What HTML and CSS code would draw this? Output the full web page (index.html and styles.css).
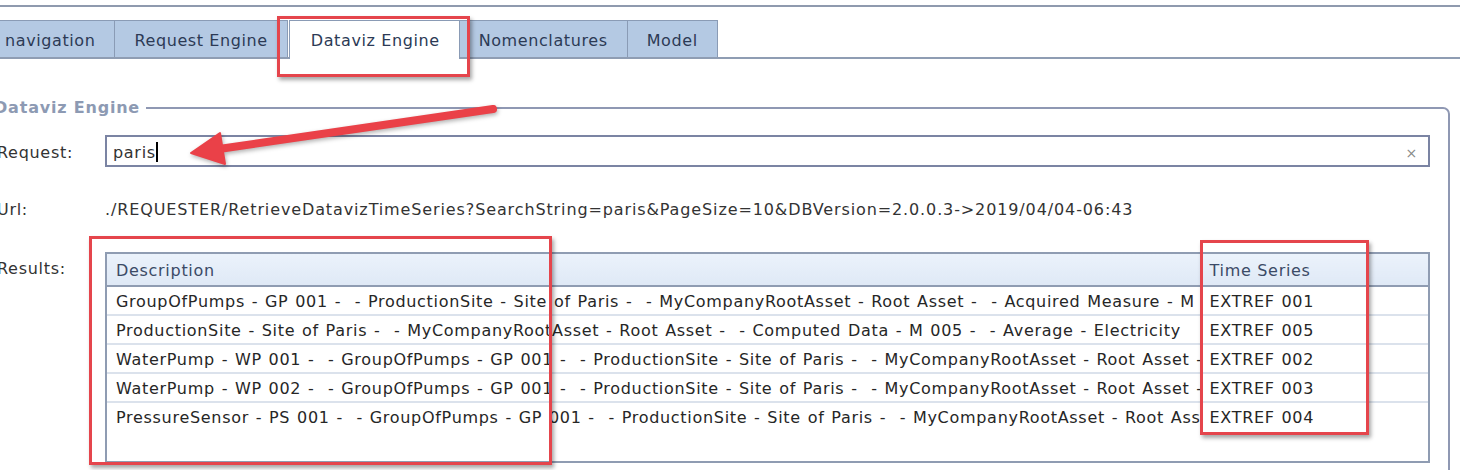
FILE: index.html
```html
<!DOCTYPE html>
<html>
<head>
<meta charset="utf-8">
<link rel="stylesheet" href="styles.css">
</head>
<body>
<div class="page">
  <div class="topline"></div>
  <div class="tabs">
    <div class="tab">navigation</div>
    <div class="tab">Request Engine</div>
    <div class="tab active">Dataviz Engine</div>
    <div class="tab">Nomenclatures</div>
    <div class="tab">Model</div>
  </div>
  <fieldset class="panel">
    <legend>Dataviz Engine</legend>
    <div class="form">
      <div class="label req-label">Request:</div>
      <div class="input"><span class="value">paris</span><span class="caret"></span><span class="clear">×</span></div>
      <div class="label url-label">Url:</div>
      <div class="url">./REQUESTER/RetrieveDatavizTimeSeries?SearchString=paris&amp;PageSize=10&amp;DBVersion=2.0.0.3-&gt;2019/04/04-06:43</div>
      <div class="label results-label">Results:</div>
      <div class="grid-wrap">
        <table class="grid">
          <colgroup><col class="c-desc"><col class="c-ts"></colgroup>
          <thead><tr><th>Description</th><th>Time Series</th></tr></thead>
          <tbody>
            <tr><td>GroupOfPumps - GP 001 -  - ProductionSite - Site of Paris -  - MyCompanyRootAsset - Root Asset -  - Acquired Measure - M 001 -  - Pressure</td><td>EXTREF 001</td></tr>
            <tr><td>ProductionSite - Site of Paris -  - MyCompanyRootAsset - Root Asset -  - Computed Data - M 005 -  - Average - Electricity</td><td>EXTREF 005</td></tr>
            <tr><td>WaterPump - WP 001 -  - GroupOfPumps - GP 001 -  - ProductionSite - Site of Paris -  - MyCompanyRootAsset - Root Asset -  - Acquired</td><td>EXTREF 002</td></tr>
            <tr><td>WaterPump - WP 002 -  - GroupOfPumps - GP 001 -  - ProductionSite - Site of Paris -  - MyCompanyRootAsset - Root Asset -  - Acquired</td><td>EXTREF 003</td></tr>
            <tr><td>PressureSensor - PS 001 -  - GroupOfPumps - GP 001 -  - ProductionSite - Site of Paris -  - MyCompanyRootAsset - Root Asset -  - Acquired</td><td>EXTREF 004</td></tr>
          </tbody>
        </table>
        <div class="grid-empty"></div>
      </div>
    </div>
  </fieldset>

  <div class="mark mark-tab"></div>
  <div class="mark mark-desc"></div>
  <div class="mark mark-ts"></div>
  <svg class="arrow" width="1460" height="470" viewBox="0 0 1460 470">
    <line x1="493" y1="109" x2="212" y2="150" stroke="#ea4148" stroke-width="8" stroke-linecap="round"/>
    <polygon points="191,153 220,133 225,164" fill="#ea4148" stroke="#ea4148" stroke-width="2" stroke-linejoin="round"/>
  </svg>
</div>
</body>
</html>
```

FILE: styles.css
```css
html, body {
  margin: 0;
  padding: 0;
  overflow: hidden;
  background: #ffffff;
}
body {
  font-family: "DejaVu Sans", Verdana, sans-serif;
  font-size: 16px;
  letter-spacing: 0.7px;
  color: #333333;
}
.page {
  position: relative;
  margin-left: -14px;
  padding-top: 5px;
}
.topline {
  height: 2px;
  background: #8f9aae;
}
.tabs {
  display: flex;
  margin-top: 13px;
  margin-left: -1px;
  height: 37px;
  border-bottom: 2px solid #8f9db3;
}
.tab {
  box-sizing: border-box;
  height: 37px;
  padding: 3px 19px 0 19px;
  display: flex;
  align-items: center;
  background: #b4c9e3;
  border: 1px solid #8a9bb5;
  border-bottom: none;
  border-left: none;
  color: #2c3a55;
  letter-spacing: 0.6px;
}
.tab:first-child {
  border-left: 1px solid #8a9bb5;
}
.tab.active {
  background: #ffffff;
  border-left: 1px solid #8a9bb5;
  margin-left: 1px;
  padding-left: 21px;
  height: 39px;
  margin-bottom: -2px;
  padding-bottom: 2px;
}
.panel {
  margin: 39px 10px 0 0;
  padding: 17px 18px 20px 9px;
  border: 2px solid #8f98b3;
  border-radius: 0 7px 0 0;
  min-height: 400px;
}
.panel legend {
  margin-left: -3px;
  padding: 0 6px 0 0;
  line-height: 20px;
  font-weight: bold;
  letter-spacing: 0.8px;
  color: #8d9ab3;
}
.form {
  display: grid;
  grid-template-columns: 108px 1fr;
  align-items: start;
}
.label {
  line-height: 32px;
}
.req-label {
  padding-top: 3px;
  line-height: 29px;
}
.input {
  box-sizing: border-box;
  height: 32px;
  border: 2px solid #7b84a3;
  display: flex;
  align-items: center;
  padding: 3px 6px 0 6px;
}
.caret {
  width: 2px;
  height: 20px;
  background: #000;
  margin-top: -2px;
}
.clear {
  margin-left: auto;
  margin-right: 4px;
  color: #8a8a8a;
  font-size: 14px;
}
.url-label, .url {
  margin-top: 27px;
  line-height: 32px;
}
.url {
  letter-spacing: 0.88px;
}
.results-label {
  margin-top: 26px;
  padding-top: 2px;
  line-height: 30px;
}
.grid-wrap {
  margin-top: 26px;
  border: 2px solid #8f9cb2;
}
.grid {
  width: 100%;
  table-layout: fixed;
  border-collapse: collapse;
}
.c-desc { width: 1093px; }
.grid th {
  height: 30px;
  padding: 1px 9px 0 9px;
  text-align: left;
  font-weight: normal;
  color: #3b4a66;
  background: linear-gradient(#ebf2fb, #dfe9f6);
  border-bottom: 2px solid #8f9cb2;
  white-space: pre;
  overflow: hidden;
}
.grid th + th {
  border-left: 1px solid #c4d0e0;
}
.grid td {
  height: 26px;
  padding: 1px 9px 0 9px;
  border-bottom: 2px solid #dbe2ec;
  white-space: pre;
  overflow: hidden;
  text-overflow: clip;
  word-spacing: 1px;
  color: #262626;
}
.grid td + td {
  border-left: 1px solid #dbe2ec;
}
.grid tbody tr:last-child td {
  border-bottom: none;
}
.grid-empty {
  height: 31px;
}
.mark {
  position: absolute;
  border: 3px solid #e5454c;
  box-shadow: 2px 3px 4px rgba(0, 0, 0, 0.35);
  box-sizing: border-box;
  pointer-events: none;
}
.mark-tab { left: 291px; top: 16px; width: 193px; height: 61px; }
.mark-desc { left: 103px; top: 236px; width: 463px; height: 229px; }
.mark-ts { left: 1214px; top: 240px; width: 169px; height: 195px; }
.arrow {
  position: absolute;
  left: 14px;
  top: 0;
  pointer-events: none;
  filter: drop-shadow(1px 2px 2px rgba(0, 0, 0, 0.3));
}
```
